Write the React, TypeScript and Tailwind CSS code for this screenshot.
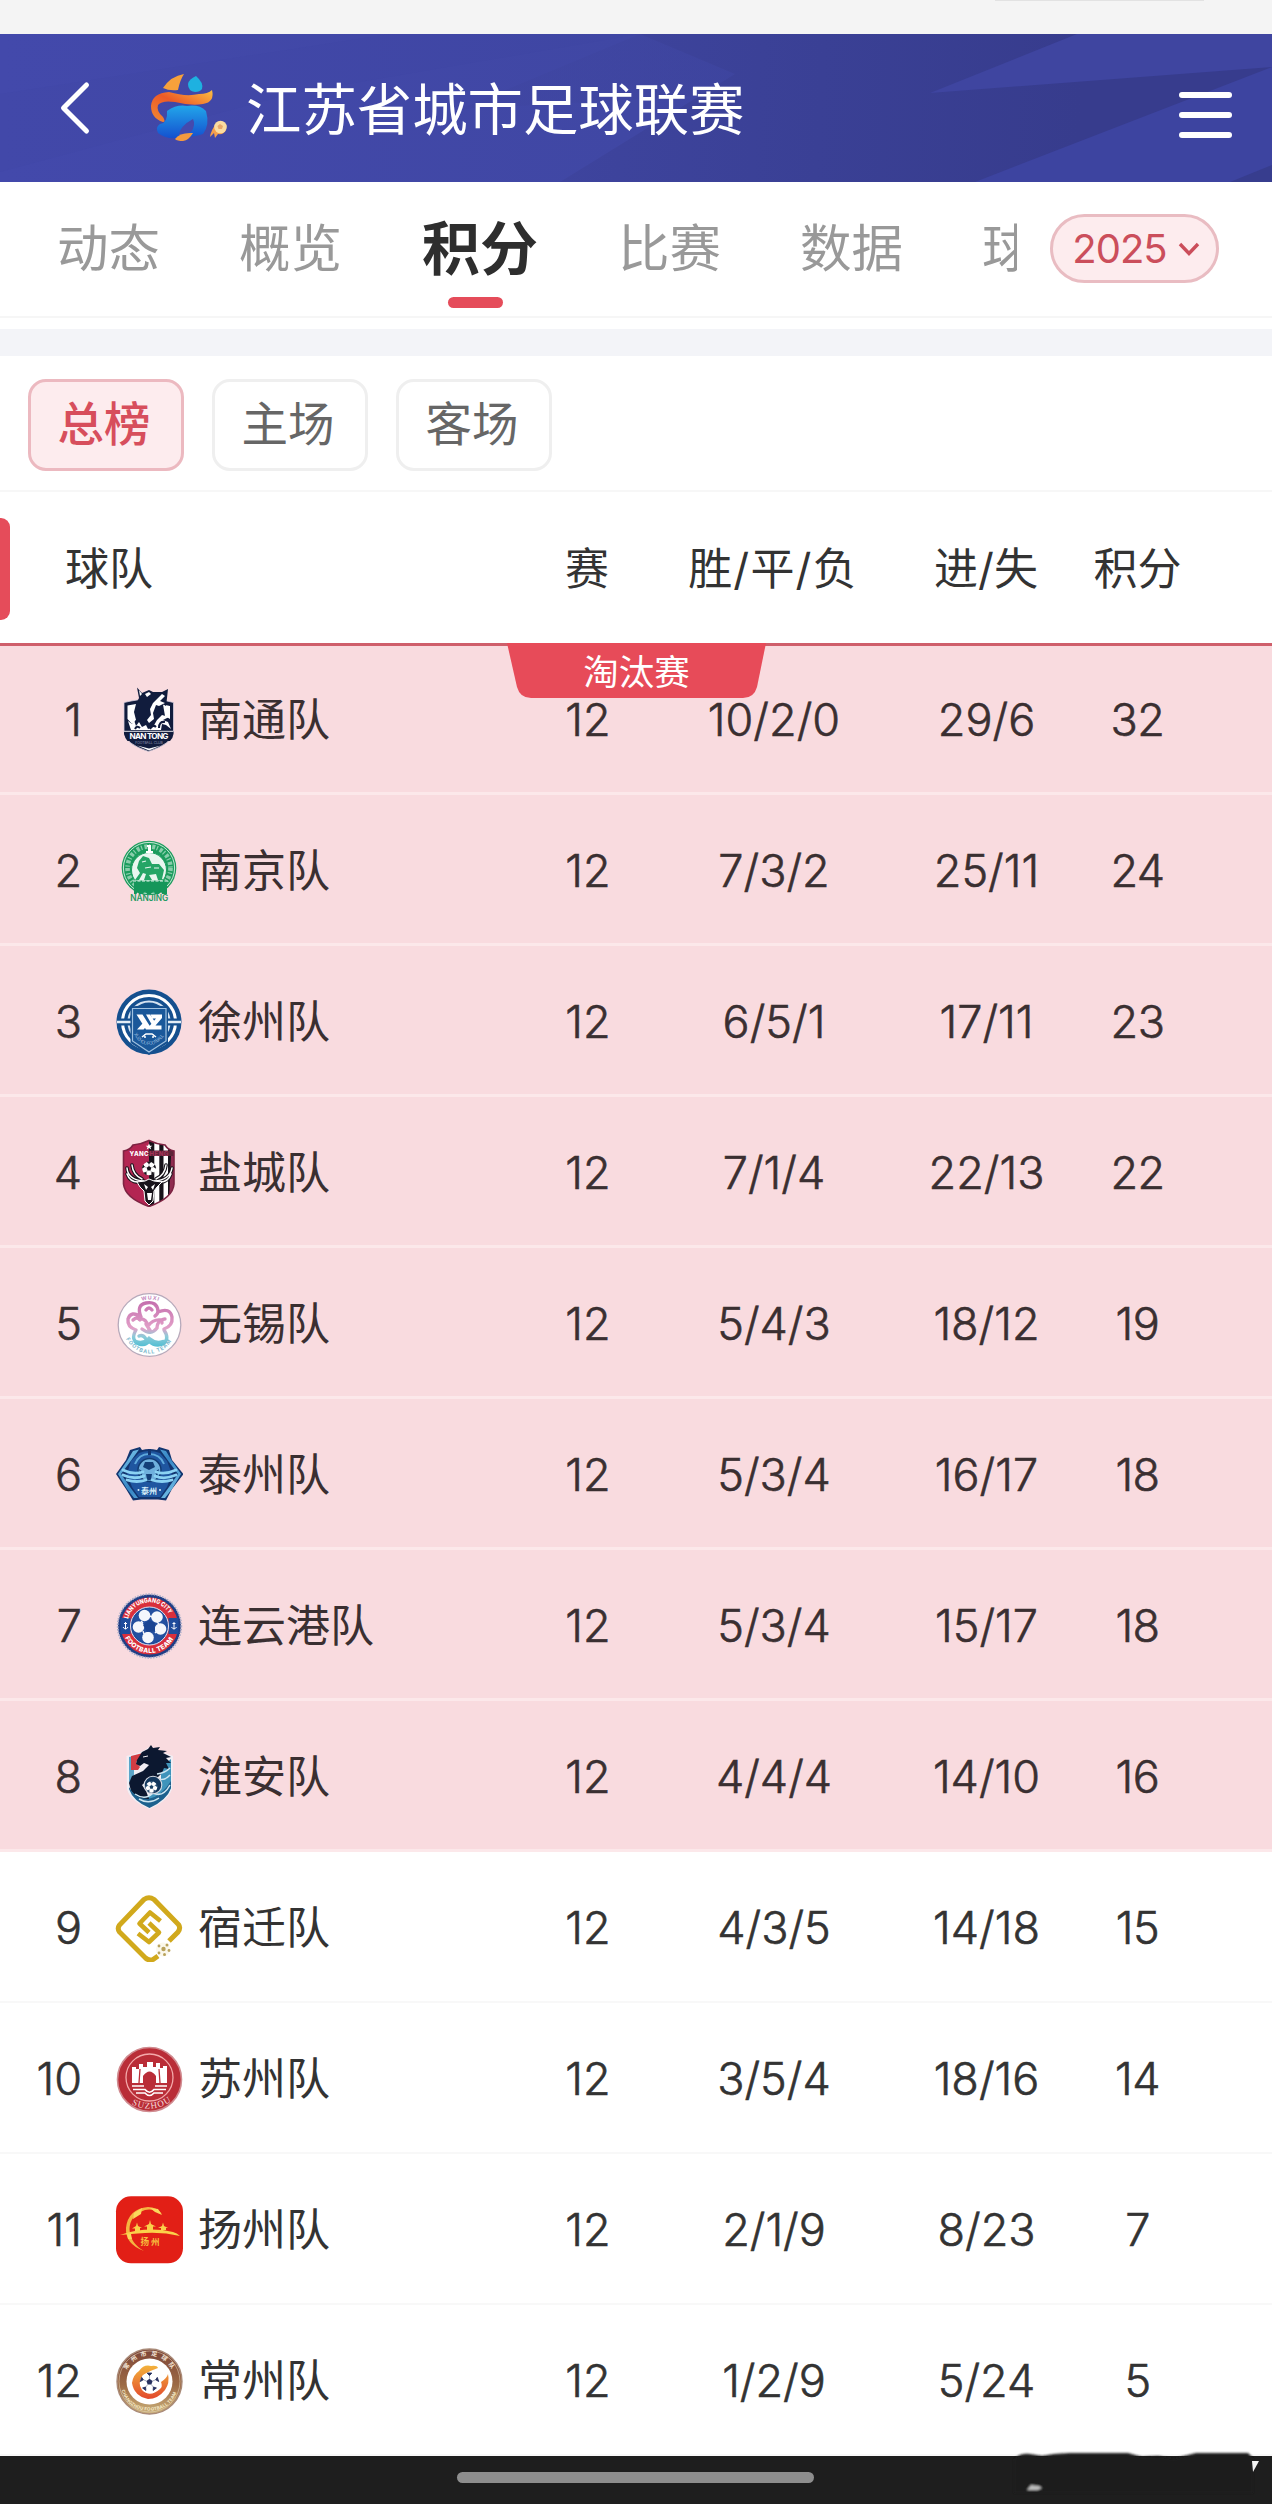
import type React from 'react'

interface Team {
  rank: number
  name: string
  played: number
  record: string
  goals: string
  points: number
  logo: React.ReactNode
}

const LogoFrame: React.FC<{ children: React.ReactNode }> = ({ children }) => (
  <svg viewBox="0 0 68 68" className="w-[68px] h-[68px] shrink-0">
    {children}
  </svg>
)

const Ball: React.FC<{ cx: number; cy: number; r: number; color: string }> = ({ cx, cy, r, color }) => (
  <g transform={`translate(${cx} ${cy}) scale(${r / 20})`}>
    <circle r="20" fill="#fff" />
    <path d="M0-7 6.7-2.2 4.1 5.7H-4.1L-6.7-2.2Z" fill={color} />
    <path
      d="M-5-19.4 5-19.4 0-14ZM17-10 19.9-1 13.5-5ZM15 13 8 18.3 8.5 11ZM-15 13-8 18.3-8.5 11ZM-17-10-19.9-1-13.5-5Z"
      fill={color}
      stroke={color}
      strokeWidth="2"
    />
    <path
      d="M0-7V-15M6.7-2.2 14-5M4.1 5.7 9 12M-4.1 5.7-9 12M-6.7-2.2-14-5"
      stroke={color}
      strokeWidth="1.4"
      opacity=".6"
    />
  </g>
)

const NantongLogo = () => (
  <LogoFrame>
    <path d="M9 16.5 16 15 34 12 52 15 58.5 16.5V46Q57 58 33.5 65.5 10 58 9 46Z" fill="#111c3d" stroke="#d8cfe0" strokeWidth=".8" />
    <path d="M12.5 19.5 21 18V34L17 38 12.5 33ZM48 18.5 55 20V33L50 30Z" fill="#fff" />
    <path d="M22 1.5 27 7 34 4 38 6 47 6 53 3 52 12 51 20 46 17 43 22 45 28 40 34 41 43 28 44 17 41 21 34 19 26 21 18 24 12Z" fill="#111c3d" />
    <path d="M38 17 47 8 50 10 45 15 50 17 44 20 41 19 38 27 39 33 34 37 32 34 36 29 35 23Z" fill="#fff" />
    <path d="M24 4 27 8 25 10ZM30 8 34 6 36 8 32 11ZM13 35 17 38 19 34 21 40 24 36 27 41 31 39 33 43 38 41 42 34 47 29 54 31 48 34 53 36 56 43 51 39 47 38 46 44H16Z" fill="#fff" />
    <path d="M44 42Q44 35 50 36M20 43Q22 39 25 42M35 43Q38 38 41 41" stroke="#111c3d" strokeWidth="2" fill="none" />
    <path d="M9 45H58.5V48Q58 52 55 55H12.5Q10 52 9 48Z" fill="#111c3d" />
    <path d="M9 45.3H58.5" stroke="#fff" strokeWidth=".9" />
    <text x="34" y="53.3" fontSize="8.2" fontWeight="700" textAnchor="middle" textLength="39" fill="#fff">NAN TONG</text>
    <text x="34" y="58.2" fontSize="3.4" textAnchor="middle" fill="#aab2c8">FOOTBALL CLUB</text>
    <path d="M22 59.5 34 62.5 46 59.5 34 64.6Z" fill="#fff" />
  </LogoFrame>
)

const NanjingLogo = () => (
  <LogoFrame>
    <circle cx="34" cy="31" r="27.3" fill="#1c9c5d" />
    <circle cx="34" cy="31" r="25.6" fill="none" stroke="#c9e9d9" strokeWidth="1" />
    <circle cx="34" cy="31" r="21.5" fill="none" stroke="#b9e3cd" strokeWidth="4.6" strokeDasharray="3 1.6 1.2 2.2" opacity=".7" />
    <circle cx="34" cy="33" r="17.5" fill="#e9f6ef" stroke="#1c9c5d" strokeWidth="1" />
    <path d="M32 8H36V14H38V16H31V14H33V10H32Z" fill="#fff" />
    <path d="M24 24 28 19 34 21 37 27 44 27 49 33 47 42 50 43H43L41 37 34 38 37 43H29L31 37 28 36 24 43H20L25 36 22 31Z" fill="#25a566" />
    <path d="M27 25 31 24M30 31 36 30M39 31 44 31" stroke="#e9f6ef" strokeWidth="1.2" />
    <path d="M19 43.5H52V57H47Q46 53 44 57H40Q38.5 52 36 57H32Q30 52 28 57H24Q23 53 21.5 57H19Z" fill="#15965a" />
    <path d="M18 44H53" stroke="#e9f6ef" strokeWidth="1" strokeDasharray="3 1.5" />
    <text x="34.2" y="64.3" fontSize="8.3" textAnchor="middle" textLength="38" fill="#249a62" fontWeight="600">NANJING</text>
  </LogoFrame>
)

const XuzhouLogo = () => (
  <LogoFrame>
    <circle cx="34" cy="34" r="32.5" fill="#15508f" />
    <circle cx="34" cy="34" r="26.5" fill="none" stroke="#fff" strokeWidth="3" />
    <circle cx="34" cy="34" r="20.5" fill="none" stroke="#d5e3f1" strokeWidth="2.2" />
    <path d="M2 34H66" stroke="#15508f" strokeWidth="7" />
    <path d="M2 34H66" stroke="#e3edf6" strokeWidth="2.4" />
    <path d="M15.5 18.5 34 17 53 18.5V55L34 67 15.5 55Z" fill="#15508f" />
    <path d="M17.5 20.5H51V53L34 64 17.5 53Z" fill="#1a589a" stroke="#9fc1e0" strokeWidth="1.2" />
    <path d="M21.5 26.5H27.5L37 41.5H31ZM28 35 31 39 28.5 41.5H22ZM31 26.5H35L40 34 37 37ZM35.5 26.5H47V30L40.5 37.5H46.5V41.5H34.5V38L41 30.5H37.5Z" fill="#fff" />
    <path d="M27 49 31 46H37L41 49M30 46V50M38 46V50" stroke="#fff" strokeWidth="1.5" fill="none" />
    <path id="xz-arc" d="M19 46Q25 57 34 57 43 57 50 46" fill="none" />
    <text fontSize="4.6" fill="#b9d2e9">
      <textPath href="#xz-arc" textLength="38">XUZHOU FOOTBALL</textPath>
    </text>
  </LogoFrame>
)

const YanchengLogo = () => (
  <LogoFrame>
    <clipPath id="yc">
      <path d="M8.5 12Q15 11 18 6 27 5 34 1.5 41 5 50 6 53 11 59 12V45Q58 59 34 67.5 10 59 8.5 45Z" />
    </clipPath>
    <g clipPath="url(#yc)">
      <path d="M0 0H34V68H0Z" fill="#b32552" />
      <path d="M34 0H68V68H34Z" fill="#17131a" />
      <path d="M39.3 4H44.3V68H39.3ZM48.5 4H53V68H48.5Z" fill="#fff" />
      <path d="M33 11.5H60V17H33Z" fill="#5d2438" />
      <path d="M56 17H60V60L54 62Z" fill="#8f2c50" />
    </g>
    <path d="M8.5 12Q15 11 18 6 27 5 34 1.5 41 5 50 6 53 11 59 12V45Q58 59 34 67.5 10 59 8.5 45Z" fill="none" stroke="#7d2342" strokeWidth="1.6" />
    <path d="M34 4.5 35 6.8H37.3L35.5 8.2 36.2 10.5 34 9 31.8 10.5 32.5 8.2 30.7 6.8H33Z" fill="#fff" />
    <text x="33.5" y="16.8" fontSize="6.2" fontWeight="800" textAnchor="end" textLength="19" fill="#fff">YANC</text>
    <text x="34.5" y="16.8" fontSize="6.2" fontWeight="800" textLength="19" fill="#a03357">HENG</text>
    <Ball cx={34} cy={29.5} r={6.8} color="#17131a" />
    <g fill="none" strokeLinecap="round">
      <path d="M29 42Q13 41 12 29M27 40Q18 36 17 26M29 42Q16 46 12 35M39 42Q55 41 57 29M41 40Q50 36 51 26M39 42Q52 46 56 35" stroke="#17131a" strokeWidth="3.6" />
      <path d="M29 42Q13 41 12 29M27 40Q18 36 17 26M29 42Q16 46 12 35M39 42Q55 41 57 29M41 40Q50 36 51 26M39 42Q52 46 56 35" stroke="#fff" strokeWidth="1.5" />
    </g>
    <path d="M22 43 30 42 34 40 39 42 47 43 42 48 39 52 38 62 34 66 30 62 29 52 25 48Z" fill="#17131a" stroke="#fff" strokeWidth="1" />
    <path d="M29 45 33 48 31 51ZM40 45 36 48 38 51ZM32 54H37L36 61H33Z" fill="#fff" />
  </LogoFrame>
)

const WuxiLogo = () => (
  <LogoFrame>
    <defs>
      <linearGradient id="wx" gradientUnits="userSpaceOnUse" x1="0" y1="12" x2="0" y2="56">
        <stop offset="0" stopColor="#c56fae" />
        <stop offset=".6" stopColor="#e2a0c8" />
        <stop offset=".78" stopColor="#8ecbd9" />
        <stop offset="1" stopColor="#56bfd3" />
      </linearGradient>
    </defs>
    <circle cx="34.5" cy="35" r="31.3" fill="#fff" stroke="#b7aabb" strokeWidth="1.3" />
    <g fill="none" stroke="url(#wx)" strokeWidth="3.4" strokeLinecap="round">
      <path d="M26 27Q21 15 31 13 42 11 43 21 43 24 40 26M31 20Q34 16 37 20M26 27Q16 20 13 29 12 37 21 40M18 30Q22 26 25 30M43 22Q55 17 57 27 58 36 49 39M50 29Q46 29 47 33M21 40Q15 50 24 54 31 56 34 51 40 57 48 54 55 49 49 40M24 46Q28 44 31 49" />
      <path d="M24 29Q31 28 33 36 38 29 46 30 42 33 42 38 36 46 27 39M31 34 36 42" />
      <path d="M21 52Q28 55 34 49 41 55 48 52" strokeWidth="4.5" />
    </g>
    <path id="wx-top" d="M24 12Q34.5 7 46 12" fill="none" />
    <path id="wx-bot" d="M11 49Q20 63.5 34.5 63.5 49 63.5 58 49" fill="none" />
    <text fontSize="5.3" fontWeight="700" fill="#c58abd">
      <textPath href="#wx-top" startOffset="3" textLength="17">WUXI</textPath>
    </text>
    <text fontSize="5.3" fontWeight="700" fill="#7cb9ce">
      <textPath href="#wx-bot" textLength="55">FOOTBALL TEAM</textPath>
    </text>
  </LogoFrame>
)

const TaizhouLogo = () => (
  <LogoFrame>
    <defs>
      <linearGradient id="tz" x1="0" y1="0" x2="1" y2="1">
        <stop offset="0" stopColor="#7cc8ec" />
        <stop offset=".5" stopColor="#3585c4" />
        <stop offset="1" stopColor="#7cc8ec" />
      </linearGradient>
    </defs>
    <path d="M15 9 25 6 27 9Q34 7 42 9L44 6 54 9 57 19 68.5 33 57 48 51 59.5 43 58.5H26L18 59.5 11 48 1 33 11 19Z" fill="#12356f" />
    <path d="M24 12Q34 8 45 12L52 20 57 33 52 46 45 56H24L17 46 12 33 16 20Z" fill="#1f56a0" />
    <path d="M18 10 24 8.5 15 21 6 33 15 46 23 57H19L12 48 3 33 12 20ZM51 10 45 8.5 54 21 63 33 54 46 46 57H50L57 48 66 33 57 20Z" fill="url(#tz)" />
    <path d="M20 23Q24 13 34 13 45 13 49 23" stroke="#5ea9dc" strokeWidth="2" fill="none" />
    <path d="M33 8H36V14H33Z" fill="#12356f" />
    <circle cx="34.5" cy="29" r="11.5" fill="#6fb0dd" stroke="#123c74" strokeWidth="1.5" />
    <path d="M30 21H38L40 26 34 29 28 26ZM24 28 28 31 26 36ZM44 28 40 31 42 36ZM31 33H37L36 39H32Z" fill="#143f78" />
    <g fill="none" strokeLinecap="round">
      <path d="M8 29Q18 34 28 31M8 34Q19 39 29 35M12 39Q22 42 31 39M61 29Q50 34 41 31M61 34Q49 39 40 35M57 39Q47 42 37 39" stroke="#8bd2f3" strokeWidth="2.8" />
    </g>
    <text x="34" y="52.5" fontSize="8" fontWeight="700" textAnchor="middle" fill="#d9f1fb">泰州</text>
    <circle cx="23.5" cy="49" r="1" fill="#d9f1fb" />
    <circle cx="45" cy="49" r="1" fill="#d9f1fb" />
  </LogoFrame>
)

const LianyungangLogo = () => (
  <LogoFrame>
    <circle cx="34.5" cy="34" r="31.5" fill="#1f3f86" />
    <circle cx="34.5" cy="34" r="31.8" fill="none" stroke="#a9acc8" strokeWidth="1.8" strokeDasharray="1.5 1.3" />
    <circle cx="34.5" cy="34" r="23.8" fill="none" stroke="#d92f3c" strokeWidth="9.5" />
    <path d="M5.5 26H15.5V42H5.5ZM53.5 26H63.5V42H53.5Z" fill="#1f4c9b" />
    <circle cx="34.5" cy="34" r="19" fill="#1f4c9b" stroke="#e8e2ef" strokeWidth="1" />
    <circle cx="34.5" cy="34" r="17" fill="#2450a0" />
    <g fill="#f4f7fc">
      <circle cx="29.5" cy="23.5" r="5.8" />
      <circle cx="42" cy="25" r="5.8" />
      <circle cx="23.5" cy="35" r="5.8" />
      <circle cx="45.5" cy="37" r="5.8" />
      <circle cx="33" cy="45.5" r="5.8" />
    </g>
    <path d="M34 28 40 31 40 39 32 40 28 33Z" fill="#1a4492" />
    <path d="M34 24 38 25M26 29 28 31M28 39 29 42M40 41 42 39M42 30 44 32" stroke="#f4f7fc" strokeWidth="1.4" />
    <path d="M10.5 30V37M8 35Q10.5 39 13 35M9 31.5H12M59 30V37M56.5 35Q59 39 61.5 35M57.5 31.5H60.5" stroke="#fff" strokeWidth="1" fill="none" />
    <path id="lyg-top" d="M13 27A22.2 22.2 0 0 1 56 27" fill="none" />
    <path id="lyg-bot" d="M8.5 42A27.3 27.3 0 0 0 60.5 42" fill="none" />
    <text fontSize="6.3" fontWeight="800" fill="#fff">
      <textPath href="#lyg-top" textLength="53" lengthAdjust="spacingAndGlyphs">LIANYUNGANG CITY</textPath>
    </text>
    <text fontSize="6.5" fontWeight="800" fill="#fff">
      <textPath href="#lyg-bot" startOffset="4" textLength="59">FOOTBALL TEAM</textPath>
    </text>
  </LogoFrame>
)

const HuaianLogo = () => (
  <LogoFrame>
    <path d="M11.5 13Q27 10 34 4 45 8 58 13L57 46Q53 58 34.5 66 15 58 12 46Z" fill="#f1eef4" />
    <path d="M14 14 19 13V32L14 40Z" fill="#5aa5c8" />
    <path d="M16 13 28 10 25 16 21 19 25 24 23 27H16Z" fill="#d23c43" />
    <path d="M46 24 56 16V45Q52 56 34.5 64L24 58 36 52 46 42Z" fill="#3f94bb" />
    <path d="M22 17 27 9 33 6 36 2 38 5 45 4 43 7 52 8 48 10 56 14 51 15 56 20 51 20 54 26 49 25 47 30 42 35 33 37 27 42 31 48 35 58 24 57 16 48 14 40 17 33 28 28 34 22 29 20 25 23 21 21Z" fill="#0c1830" />
    <path d="M14 44Q20 56 33 56 46 54 56 38V45Q52 57 34.5 65 18 58 14 46Z" fill="#1d618e" />
    <path d="M20 51Q30 58 38 50 48 55 55 42M24 56Q34 62 44 55M42 31Q50 30 55 25M43 36Q50 38 55 32" stroke="#cde6f1" strokeWidth="1.5" fill="none" />
    <path d="M28 14 33 13" stroke="#f1eef4" strokeWidth="1" />
    <circle cx="38" cy="42" r="8.8" fill="#12365c" stroke="#d4d9e2" strokeWidth="1.1" />
    <Ball cx={36.5} cy={44} r={5.8} color="#1c4469" />
  </LogoFrame>
)

const SuqianLogo = () => (
  <LogoFrame>
    <path d="M43 62 38 65.5Q34 67 30.5 64L4.5 38Q2 34.5 4.5 31L29 5.5Q34 2 39 5.5L63.5 30.5Q66 34 63 38L54 47" fill="none" stroke="#d1a91c" strokeWidth="5" />
    <path d="M45.5 27 35 18.5 24.5 29.5 34 38.5M34 29 44 38.5 34 48 23 39.5" fill="none" stroke="#d1a91c" strokeWidth="4.6" strokeLinejoin="round" />
    <g fill="#b9a25c">
      <circle cx="48" cy="55.5" r="7" fill="#fbf8ec" />
      <circle cx="48.5" cy="55" r="2.2" />
      <circle cx="44" cy="52" r="1.4" />
      <circle cx="52" cy="51" r="1.5" />
      <circle cx="54" cy="56.5" r="1.4" />
      <circle cx="49.5" cy="60.5" r="1.5" />
      <circle cx="44" cy="59" r="1.4" />
    </g>
  </LogoFrame>
)

const SuzhouLogo = () => (
  <LogoFrame>
    <circle cx="34.5" cy="34.5" r="32" fill="#b92d37" stroke="#d08b90" strokeWidth="1.6" />
    <circle cx="34.5" cy="32.5" r="23.5" fill="none" stroke="#f4a9aa" strokeWidth="1.3" />
    <path d="M17 22H21V24H24V19H28V22H32V17H38V22H41V18H45V23H48V21H52V38H41V31Q34.5 22 28 31V38H17Z" fill="#fff" />
    <path d="M25 24 24 38M44 24 45 38" stroke="#b92d37" strokeWidth="1.3" />
    <path d="M17 41H29M40 41H52M18 44.5H30Q34.5 50 39 44.5H51M21 48H30Q34.5 53 39 48H48" stroke="#fff" strokeWidth="1.7" fill="none" />
    <path id="sz-arc" d="M13 57Q34.5 71 57 56" fill="none" />
    <text fontSize="9" fontFamily="Liberation Serif" fill="#f6d9da">
      <textPath href="#sz-arc" startOffset="4" textLength="42">SUZHOU</textPath>
    </text>
  </LogoFrame>
)

const YangzhouLogo = () => (
  <LogoFrame>
    <rect x="1" y=".3" width="67" height="67" rx="15" fill="#e21f16" />
    <path d="M29 55Q10 48 11 32 13 13 33 11 42 11 47 18 38 12 30 14 15 19 14.5 33 15 47 29 55Z" fill="#f5b541" />
    <path d="M19 17 27 12 26 18 18 23ZM35 12 43 13 47 19 40 16ZM12 38 16 38 17 43 13 43Z" fill="#fbd75c" />
    <path d="M5 39Q32 30 58 36 62 37 65 40 48 36 30 37 15 38 5 39Z" fill="#fbd04a" />
    <path d="M35 24 36 28 41 30.5 38 30.5V34H32V30.5L29 30.5 34 28ZM22 26.500 23 30 27 32H25V35H20V32.500L17 32.500 21 30ZM48 26.500 49 30 53 32H51V34H46V32L43 32 47 30Z" fill="#fbd04a" />
    <text x="35" y="49" fontSize="8.6" fontWeight="700" textAnchor="middle" textLength="19" fill="#f7bd3e">扬州</text>
  </LogoFrame>
)

const ChangzhouLogo = () => (
  <LogoFrame>
    <defs>
      <linearGradient id="cz" x1="0" y1="0" x2="0" y2="1">
        <stop offset="0" stopColor="#7d4538" />
        <stop offset=".55" stopColor="#9c6a45" />
        <stop offset="1" stopColor="#cbb07a" />
      </linearGradient>
      <linearGradient id="cz-fire" x1="0" y1="0" x2="0" y2="1">
        <stop offset="0" stopColor="#f3b23c" />
        <stop offset="1" stopColor="#e2492c" />
      </linearGradient>
    </defs>
    <circle cx="34.5" cy="34.5" r="32.5" fill="url(#cz)" stroke="#a98a78" strokeWidth="1.4" />
    <circle cx="34.5" cy="34.5" r="30.5" fill="none" stroke="#e9dcc4" strokeWidth=".5" />
    <circle cx="34.5" cy="34.5" r="23" fill="#fff" />
    <path d="M24 24Q29 17 36 19 42 18 43 21 34 24 28 28 22 36 27 43 35 51 45 42 48 40 46 35 52 31 53 27 55 36 50 43 43 52 33 52 19 49 17 36 18 28 24 24Z" fill="url(#cz-fire)" />
    <Ball cx={34.5} cy={35} r={9.2} color="#26305f" />
    <path id="cz-top" d="M11 24Q20 8.5 34.5 8.5 49 8.5 58 24" fill="none" />
    <path id="cz-bot" d="M6 41Q12 63.5 34.5 63.5 57 63.5 63 41" fill="none" />
    <text fontSize="6" fontWeight="700" fill="#f5e7d8">
      <textPath href="#cz-top" startOffset="1" textLength="56">常州市足球队</textPath>
    </text>
    <text fontSize="4.4" fontWeight="700" fill="#f7ecca">
      <textPath href="#cz-bot" startOffset="2" textLength="72">CHANGZHOU FOOTBALL TEAM</textPath>
    </text>
  </LogoFrame>
)

const teams: Team[] = [
  { rank: 1, name: '南通队', played: 12, record: '10/2/0', goals: '29/6', points: 32, logo: <NantongLogo /> },
  { rank: 2, name: '南京队', played: 12, record: '7/3/2', goals: '25/11', points: 24, logo: <NanjingLogo /> },
  { rank: 3, name: '徐州队', played: 12, record: '6/5/1', goals: '17/11', points: 23, logo: <XuzhouLogo /> },
  { rank: 4, name: '盐城队', played: 12, record: '7/1/4', goals: '22/13', points: 22, logo: <YanchengLogo /> },
  { rank: 5, name: '无锡队', played: 12, record: '5/4/3', goals: '18/12', points: 19, logo: <WuxiLogo /> },
  { rank: 6, name: '泰州队', played: 12, record: '5/3/4', goals: '16/17', points: 18, logo: <TaizhouLogo /> },
  { rank: 7, name: '连云港队', played: 12, record: '5/3/4', goals: '15/17', points: 18, logo: <LianyungangLogo /> },
  { rank: 8, name: '淮安队', played: 12, record: '4/4/4', goals: '14/10', points: 16, logo: <HuaianLogo /> },
  { rank: 9, name: '宿迁队', played: 12, record: '4/3/5', goals: '14/18', points: 15, logo: <SuqianLogo /> },
  { rank: 10, name: '苏州队', played: 12, record: '3/5/4', goals: '18/16', points: 14, logo: <SuzhouLogo /> },
  { rank: 11, name: '扬州队', played: 12, record: '2/1/9', goals: '8/23', points: 7, logo: <YangzhouLogo /> },
  { rank: 12, name: '常州队', played: 12, record: '1/2/9', goals: '5/24', points: 5, logo: <ChangzhouLogo /> },
]

const LeagueLogo = () => (
  <svg viewBox="0 0 80 70" className="w-[80px] h-[70px] shrink-0">
    <defs>
      <linearGradient id="lg-orange" x1="0" y1="1" x2="1" y2="0">
        <stop offset="0" stopColor="#f08a35" />
        <stop offset=".5" stopColor="#ee5a26" />
        <stop offset="1" stopColor="#fbc043" />
      </linearGradient>
      <linearGradient id="lg-blue" x1="0" y1="0" x2="0" y2="1">
        <stop offset="0" stopColor="#22a6ea" />
        <stop offset="1" stopColor="#1450cf" />
      </linearGradient>
    </defs>
    <path d="M14 15Q22 3 35 1 31 7 29 17 20 18 14 15Z" fill="#f7a13b" />
    <path d="M47 3Q55 10 53 16 51 19 46 19 39 18 39 11 40 6 47 3Z" fill="#1eb1e0" />
    <path d="M18 38Q28 31 38 33 50 31 57 38 61 52 54 61 46 64 34 64 19 68 9 60 6 54 11 51 19 50 18 38Z" fill="url(#lg-blue)" />
    <path d="M2 33Q3 20 20 19 37 24 50 21 59 21 63 17 66 29 54 31 42 33 26 29 13 27 9 32 7 38 14 44 17 49 14 49 2 45 2 33Z" fill="url(#lg-orange)" />
    <path d="M44 46Q47 52 42 59 36 62 30 62 31 53 44 46Z" fill="#444aae" />
    <path d="M26 66Q31 59 44 60 40 67 34 68 28 68 26 66Z" fill="#f59a3f" />
    <path d="M61 64Q62 57 67 51L77 57Q75 62 69 61L66 65 65 60Z" fill="#f5a04d" />
    <circle cx="71.5" cy="54" r="6.3" fill="#fbdca0" />
    <path d="M71 51 74 53 73 56 69.5 56 68.5 53Z" fill="#e9a96b" />
  </svg>
)

const TopBar = () => (
  <header className="relative h-[148px] bg-[#4047a6]">
    <svg viewBox="0 0 1272 148" preserveAspectRatio="none" className="absolute inset-0 w-full h-full">
      <defs>
        <linearGradient id="hd" x1="0" y1="0" x2="1" y2="0">
          <stop offset="0" stopColor="#4349ab" />
          <stop offset=".5" stopColor="#4047a4" />
          <stop offset="1" stopColor="#3c439c" />
        </linearGradient>
        <linearGradient id="hd-dark" gradientUnits="userSpaceOnUse" x1="560" y1="60" x2="1080" y2="90">
          <stop offset="0" stopColor="#3e449e" />
          <stop offset=".5" stopColor="#3a4095" />
          <stop offset="1" stopColor="#373c8d" />
        </linearGradient>
      </defs>
      <rect width="1272" height="148" fill="url(#hd)" />
      <path d="M390 0H640L290 60 0 138V60Z" fill="#3e45a1" opacity=".15" />
      <path d="M640 0H1077L930 59 975 148H560L740 80 735 60 460 75Z" fill="url(#hd-dark)" opacity=".4" />
      <path d="M640 0H1272V148H560L735 40Z" fill="url(#hd-dark)" />
      <path d="M1077 0H1272V33L930 59Z" fill="#3f45a0" />
      <path d="M975 148 1272 33V148Z" fill="#3d44a0" />
      <path d="M1230 148 1272 131V148Z" fill="#373d8e" />
    </svg>
    <div className="relative flex items-center h-full pl-[58px] pr-[40px]">
      <svg viewBox="0 0 34 54" className="w-[34px] h-[54px] shrink-0 mb-px" fill="none" stroke="#fff" strokeWidth="5" strokeLinecap="round" strokeLinejoin="round">
        <path d="M28.5 4 5.5 27 28.5 50" />
      </svg>
      <div className="ml-[57px]">
        <LeagueLogo />
      </div>
      <h1 className="ml-[17px] mt-[3px] text-[55.4px] leading-none text-white whitespace-nowrap">江苏省城市足球联赛</h1>
      <div className="ml-auto mt-[14px] flex flex-col gap-[14px]">
        <span className="w-[53px] h-[6px] rounded-full bg-white" />
        <span className="w-[53px] h-[6px] rounded-full bg-white" />
        <span className="w-[53px] h-[6px] rounded-full bg-white" />
      </div>
    </div>
  </header>
)

const tabs = ['动态', '概览', '积分', '比赛', '数据', '球']

const TabBar = () => (
  <nav className="flex h-[136px] border-b-2 border-[#f6f6f6]">
    <div className="flex w-[1017px] pl-[57px] overflow-hidden">
      {tabs.map((tab) =>
        tab === '积分' ? (
          <div key={tab} className="shrink-0 w-[118px] mr-[79px] flex flex-col items-center text-[58px] leading-none font-bold text-[#2e2e2e]">
            <span className="mt-[38px] h-[58px] whitespace-nowrap">{tab}</span>
            <span className="mt-[19px] mr-[10px] w-[55px] h-[11px] rounded-full bg-[#e54c5a]" />
          </div>
        ) : (
          <div
            key={tab}
            className="shrink-0 w-[103px] mr-[79px] pt-[41px] text-[51.5px] leading-none text-[#999] whitespace-nowrap"
          >
            {tab}
          </div>
        )
      )}
    </div>
    <button className="ml-[33px] mt-[32px] w-[169px] h-[69px] pl-[3px] flex items-center justify-center gap-[11px] rounded-full border-[3px] border-[#e9bcc2] bg-[#fdecee] text-[#cb4e5b] text-[40px] leading-none tracking-[-1px]">
      <span>2025</span>
      <svg viewBox="0 0 22 14" className="w-[22px] h-[14px]" fill="none" stroke="#cb4e5b" strokeWidth="3.4">
        <path d="M2 2 11 11.5 20 2" />
      </svg>
    </button>
  </nav>
)

const filters = ['总榜', '主场', '客场']

const FilterBar = () => (
  <div className="flex gap-[28px] h-[136px] pt-[23px] pl-[28px] border-b-2 border-[#f7f7f7]">
    {filters.map((filter, i) => (
      <button
        key={filter}
        className={
          i === 0
            ? 'w-[156px] h-[92px] pb-0.5 pr-1 rounded-[18px] border-[3px] border-[#ecb9c0] bg-[#fdecee] text-[#d74e5c] text-[46.5px] leading-none font-medium'
            : 'w-[156px] h-[92px] pb-0.5 pr-1 rounded-[18px] border-[3px] border-[#efefef] bg-white text-[#666] text-[46.5px] leading-none'
        }
      >
        {filter}
      </button>
    ))}
  </div>
)

const TableHead = () => (
  <div className="flex items-center h-[152px] pt-px text-[44px] leading-none text-[#333]">
    <span className="w-[10px] h-[102px] rounded-r-[9px] bg-[#e54c5a]" />
    <span className="w-[527px] pl-[55px]">球队</span>
    <span className="w-[100px] text-center">赛</span>
    <span className="w-[272px] text-center tracking-[1.2px]">胜/平/负</span>
    <span className="w-[154px] text-center">进/失</span>
    <span className="w-[149px] text-center">积分</span>
  </div>
)

const TeamRow: React.FC<{ team: Team }> = ({ team }) => {
  const qualified = team.rank <= 8

  return (
    <div
      className={
        qualified
          ? 'flex items-center h-[151px] pt-[2px] border-b-[3px] border-[#fce8ea] bg-[#f9dbdf] text-[#3a2f31] font-light'
          : 'flex items-center h-[151px] pt-px border-b-2 border-[#f8f8f8] bg-white text-[#333] font-light'
      }
    >
      <span className="w-[82px] text-right [-webkit-text-stroke:0.6px]">{team.rank}</span>
      <div className="ml-[33px] mt-px">{team.logo}</div>
      <span className="ml-[15px] mt-[2px] w-[340px] text-[44px] font-normal">{team.name}</span>
      <span className="w-[100px] text-center [-webkit-text-stroke:0.6px]">{team.played}</span>
      <span className="w-[272px] text-center [-webkit-text-stroke:0.6px]">{team.record}</span>
      <span className="w-[153px] text-center [-webkit-text-stroke:0.6px]">{team.goals}</span>
      <span className="w-[149px] text-center tracking-[-0.5px] [-webkit-text-stroke:0.6px]">{team.points}</span>
    </div>
  )
}

const KnockoutTag = () => (
  <div className="absolute left-[507px] -top-px w-[259px] h-[56px]">
    <svg viewBox="0 0 259 56" className="absolute inset-0 w-full h-full">
      <path d="M0 0H259L250 44Q247 55 236 55H24Q13 55 10 44Z" fill="#e74b59" />
    </svg>
    <span className="relative block pt-[12px] text-center text-[35.5px] leading-none text-white">淘汰赛</span>
  </div>
)

export default function App() {
  return (
    <div className="w-[1272px] h-[2504px] overflow-hidden flex flex-col bg-white font-[Inter,'Noto_Sans_CJK_SC',sans-serif]">
      {/* Status area */}
      <div className="h-[34px] bg-[#f4f4f4] flex justify-end pr-[68px]">
        <span className="w-[209px] h-px bg-[#e2e2e2]" />
      </div>
      <TopBar />
      <TabBar />
      <div className="mt-[11px] h-[27px] bg-[#f3f4f8]" />
      <FilterBar />
      <TableHead />

      {/* Standings */}
      <div className="relative h-[1812px] text-[45px] leading-none">
        {teams.map((team) => (
          <TeamRow key={team.rank} team={team} />
        ))}
        <span className="absolute inset-x-0 -top-px h-[3px] bg-[#cf5f6b]" />
        <KnockoutTag />
      </div>

      {/* Home indicator */}
      <div className="relative h-[48px] bg-[#1e1e1e] flex justify-center">
        <span className="mt-[16px] mr-[2px] w-[357px] h-[11px] rounded-full bg-[#8e8e8e]" />
        <svg viewBox="0 0 260 56" className="absolute right-0 -top-[7px] w-[260px] h-[56px]">
          <filter id="soft">
            <feGaussianBlur stdDeviation="1.2" />
          </filter>
          <g filter="url(#soft)">
            <path d="M2 10Q8 4 18 5L30 7 42 5 58 4H116L130 8 146 7 162 10 172 7 184 4H236L241 9V44H2Z" fill="#1b1b1b" />
            <path d="M15 41 19 36 27 37 30 39 26 41Z" fill="#bdbdbd" />
          </g>
          <path d="M240 12H247L241 23Z" fill="#f4f4f4" />
        </svg>
      </div>
    </div>
  )
}
